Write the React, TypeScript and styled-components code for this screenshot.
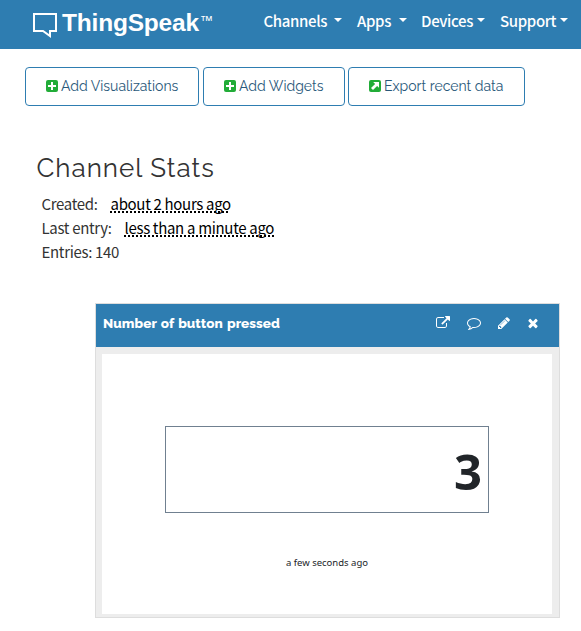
import React from "react";
import styled, { createGlobalStyle } from "styled-components";

const GlobalStyle = createGlobalStyle`
  * { box-sizing: border-box; }
  body { margin: 0; background: #fff; overflow: hidden; }
`;

const sourceSans = `"Noto Sans CJK SC", "Noto Sans", sans-serif`;

const Page = styled.div`
  width: 581px;
  height: 631px;
  overflow: hidden;
  background: #fff;
`;

const NavBar = styled.header`
  display: flex;
  height: 49px;
  padding-left: 32px;
  background: #2e7db1;
  color: #fff;
`;

const Brand = styled.div`
  display: flex;
  width: 231.5px;
  flex: none;
`;

const LogoMark = styled.svg`
  width: 26px;
  height: 27px;
  margin-top: 12px;
  flex: none;
`;

const BrandName = styled.span`
  width: 136px;
  margin: 8px 0 0 4px;
  font: 700 24.5px/30px "Liberation Sans", Arial, sans-serif;
  letter-spacing: -0.2px;
  white-space: nowrap;
`;

const Trademark = styled.span`
  margin: 14px 0 0 2px;
  font: 400 13px/13px "Liberation Sans", Arial, sans-serif;
`;

const NavItem = styled.a<{ $width: number; $gap: number }>`
  display: flex;
  flex: none;
  width: ${(p) => p.$width}px;
  height: 41px;
  align-items: center;
  gap: ${(p) => p.$gap}px;
  font: 500 15px/24px ${sourceSans};
  letter-spacing: -0.35px;
  white-space: nowrap;
`;

const Caret = styled.i`
  margin-top: -2px;
  border: 4px solid transparent;
  border-top-color: #fff;
  border-bottom: 0;
`;

const Actions = styled.div`
  display: flex;
  padding: 18px 0 0 25px;
`;

const ActionButton = styled.button<{ $width: number; $gap: number }>`
  display: flex;
  flex: none;
  width: ${(p) => p.$width}px;
  height: 39px;
  margin-right: ${(p) => p.$gap}px;
  padding: 0 0 2px 19.5px;
  align-items: center;
  gap: 3.5px;
  border: 1px solid #2e7db1;
  border-radius: 4px;
  background: #fff;
  color: #29587a;
  font: 400 14px/20px Raleway, Lato, sans-serif;
  white-space: nowrap;
`;

const ActionIcon = styled.svg`
  width: 12px;
  height: 12px;
  flex: none;
`;

const Stats = styled.section`
  padding: 45px 0 0 36.5px;
  color: #333;
`;

const Heading = styled.h2`
  margin: 0;
  font: 400 26px/34px Raleway, Lato, sans-serif;
  letter-spacing: 1px;
`;

const StatRow = styled.div`
  display: flex;
  height: 24px;
  padding-left: 5px;
  align-items: center;
  font: 400 15px/24px ${sourceSans};
  letter-spacing: -0.32px;
  white-space: nowrap;
`;

const StatLabel = styled.span<{ $width?: number }>`
  width: ${(p) => (p.$width ? `${p.$width}px` : "auto")};
`;

const TimeAgo = styled.abbr`
  color: #000;
  text-decoration: underline dotted 2px;
  text-underline-offset: 1px;
  text-decoration-skip-ink: none;
`;

const StatList = styled.div`
  padding-top: 7px;
`;

const Panel = styled.section`
  width: 465px;
  height: 315px;
  margin: 39px 0 0 95px;
  border: 1px solid #ddd;
  background: #ededed;
`;

const PanelHeader = styled.header`
  display: flex;
  height: 43px;
  padding-left: 7px;
  background: #2e7db1;
  color: #fff;
`;

const PanelTitle = styled.h3`
  width: 333px;
  margin: 0;
  font: 800 13.5px/38px Raleway, Lato, sans-serif;
  letter-spacing: 0.05px;
  word-spacing: 1px;
`;

const PanelTools = styled.div`
  display: flex;
  height: 38px;
  align-items: center;
`;

const ToolIcon = styled.svg<{ $gap: number }>`
  width: 14px;
  height: 14px;
  margin-right: ${(p) => p.$gap}px;
  fill: #fff;
`;

const PanelBody = styled.div`
  display: flex;
  flex-direction: column;
  align-items: center;
  width: 450px;
  height: 260px;
  margin: 7px 0 0 6px;
  padding-top: 72px;
  background: #fff;
`;

const ValueBox = styled.div`
  width: 324px;
  height: 87px;
  padding-right: 6px;
  border: 1px solid #708090;
  color: #212529;
  font: 700 49px/89px "Noto Sans", sans-serif;
  text-align: right;
`;

const Updated = styled.div`
  margin-top: 42px;
  color: #212529;
  font: 400 9.5px/16px "Noto Sans", sans-serif;
`;

const menu = [
  { label: "Channels", width: 93.5, gap: 7 },
  { label: "Apps", width: 64, gap: 8 },
  { label: "Devices", width: 79, gap: 4 },
  { label: "Support", width: 70, gap: 4 },
];

const tools = [
  { gap: 17, d: "M1408 928v320q0 119-84.5 203.5t-203.5 84.5h-832q-119 0-203.5-84.5t-84.5-203.5v-832q0-119 84.5-203.5t203.5-84.5h704q14 0 23 9t9 23v64q0 14-9 23t-23 9h-704q-66 0-113 47t-47 113v832q0 66 47 113t113 47h832q66 0 113-47t47-113v-320q0-14 9-23t23-9h64q14 0 23 9t9 23zm384-864v512q0 26-19 45t-45 19-45-19l-176-176-652 652q-10 10-23 10t-23-10l-114-114q-10-10-10-23t10-23l652-652-176-176q-19-19-19-45t19-45 45-19h512q26 0 45 19t19 45z" },
  { gap: 16, d: "M896 384q-204 0-381.5 69.5t-282 187.5-104.5 255q0 112 71.5 213.5t201.5 175.5l87 50-27 96q-24 91-70 172 152-63 275-171l43-38 57 6q69 8 130 8 204 0 381.5-69.5t282-187.5 104.5-255-104.5-255-282-187.5-381.5-69.5zm896 512q0 174-120 321.5t-326 233-450 85.5q-70 0-145-8-198 175-460 242-49 14-114 22h-5q-15 0-27-10.5t-16-27.5v-1q-3-4-.5-12t2-10 4.5-9.5l6-9 7-8.5 8-9q7-8 31-34.5t34.5-38 31-39.5 32.5-51 27-59 26-76q-157-89-247.5-220t-90.5-281q0-174 120-321.5t326-233 450-85.5 450 85.5 326 233 120 321.5z" },
  { gap: 15, d: "M491 1536l91-91-235-235-91 91v107h128v128h107zm523-928q0-22-22-22-10 0-17 7l-542 542q-7 7-7 17 0 22 22 22 10 0 17-7l542-542q7-7 7-17zm-54-192l416 416-832 832h-416v-416zm683 96q0 53-37 90l-166 166-416-416 166-165q36-38 90-38 53 0 91 38l235 234q37 39 37 91z" },
  { gap: 0, d: "M1490 1322q0 40-28 68l-136 136q-28 28-68 28t-68-28l-294-294-294 294q-28 28-68 28t-68-28l-136-136q-28-28-28-68t28-68l294-294-294-294q-28-28-28-68t28-68l136-136q28-28 68-28t68 28l294 294 294-294q28-28 68-28t68 28l136 136q28 28 28 68t-28 68l-294 294 294 294q28 28 28 68z" },
];

function PlusIcon() {
  return (
    <ActionIcon viewBox="0 0 12 12">
      <rect width="12" height="12" rx="2" fill="#22ac38" />
      <path d="M6 2v8M2 6h8" stroke="#fff" strokeWidth="2" />
    </ActionIcon>
  );
}

function ExportIcon() {
  return (
    <ActionIcon viewBox="0 0 12 12">
      <rect width="12" height="12" rx="2" fill="#22ac38" />
      <path d="M4.2 2H10v5.8L8.1 5.9 4 10 2 8l4.1-4.1z" fill="#fff" />
    </ActionIcon>
  );
}

export default function App() {
  return (
    <Page>
      <GlobalStyle />
      <NavBar>
        <Brand>
          <LogoMark viewBox="0 0 26 27">
            <path d="M2 2h22v17h-6v5l-7-5H2z" fill="none" stroke="#fff" strokeWidth="2" />
          </LogoMark>
          <BrandName>ThingSpeak</BrandName>
          <Trademark>™</Trademark>
        </Brand>
        {menu.map((m) => (
          <NavItem key={m.label} $width={m.width} $gap={m.gap}>
            {m.label}
            <Caret />
          </NavItem>
        ))}
      </NavBar>
      <Actions>
        <ActionButton $width={174} $gap={4}>
          <PlusIcon />
          Add Visualizations
        </ActionButton>
        <ActionButton $width={142} $gap={3}>
          <PlusIcon />
          Add Widgets
        </ActionButton>
        <ActionButton $width={177} $gap={0}>
          <ExportIcon />
          Export recent data
        </ActionButton>
      </Actions>
      <Stats>
        <Heading>Channel Stats</Heading>
        <StatList>
          <StatRow>
            <StatLabel $width={69}>Created:</StatLabel>
            <TimeAgo>about 2 hours ago</TimeAgo>
          </StatRow>
          <StatRow>
            <StatLabel $width={83}>Last entry:</StatLabel>
            <TimeAgo>less than a minute ago</TimeAgo>
          </StatRow>
          <StatRow>
            <StatLabel>Entries: 140</StatLabel>
          </StatRow>
        </StatList>
      </Stats>
      <Panel>
        <PanelHeader>
          <PanelTitle>Number of button pressed</PanelTitle>
          <PanelTools>
            {tools.map((t) => (
              <ToolIcon key={t.d} $gap={t.gap} viewBox="0 0 1792 1792">
                <path d={t.d} />
              </ToolIcon>
            ))}
          </PanelTools>
        </PanelHeader>
        <PanelBody>
          <ValueBox>3</ValueBox>
          <Updated>a few seconds ago</Updated>
        </PanelBody>
      </Panel>
    </Page>
  );
}
